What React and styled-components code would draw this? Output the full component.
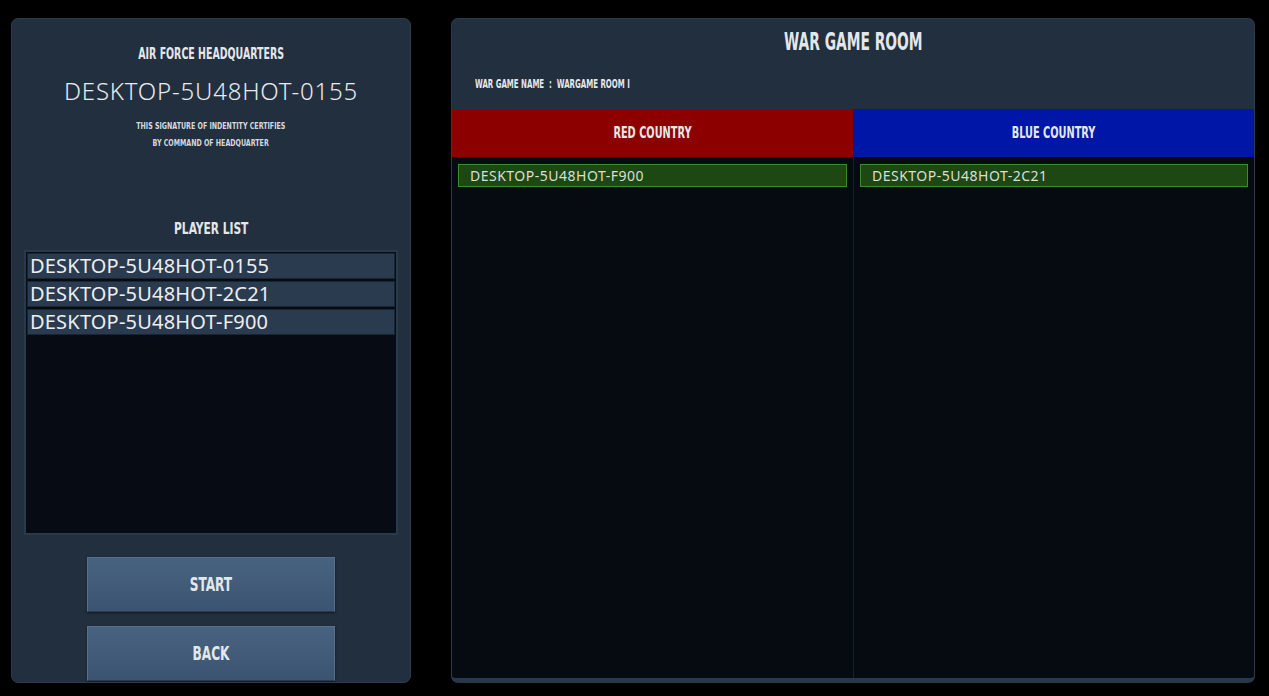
import styled, { createGlobalStyle } from "styled-components";

const GlobalStyle = createGlobalStyle`
  html, body {
    margin: 0;
    padding: 0;
    background: #000;
  }
  * { box-sizing: border-box; }
`;

const HEAD_FONT = `"DejaVu Sans Condensed", "DejaVu Sans", sans-serif`;
const ID_FONT = `"Noto Sans", "DejaVu Sans", sans-serif`;

const Screen = styled.div`
  width: 1269px;
  height: 696px;
  display: flex;
  gap: 40px;
  padding: 18px 14px 13px 11px;
  background: #000;
`;

const Panel = styled.div`
  background: #222f3f;
  border: 1px solid #2b3a4c;
  border-radius: 7px;
  box-shadow: 0 2px 4px rgba(0, 0, 0, 0.8);
  overflow: hidden;
`;

// condensed display lettering (squeezed bold sans)
const Squeeze = styled.span`
  display: inline-block;
  font-family: ${HEAD_FONT};
  font-weight: bold;
  font-size: ${(p) => p.size}px;
  line-height: ${(p) => p.lh || p.size + 2}px;
  color: ${(p) => p.color || "#e4e7ea"};
  white-space: nowrap;
  transform: scaleX(${(p) => p.sx || 0.7});
  transform-origin: ${(p) => (p.left ? "left center" : "center")};
`;

const Center = styled.div`
  text-align: center;
  margin-top: ${(p) => p.mt || 0}px;
`;

const LeftPanel = styled(Panel)`
  width: 400px;
  display: flex;
  flex-direction: column;
  align-items: center;
  padding: 26px 12px 0;
`;

const BigId = styled.div`
  margin-top: 13px;
  font-family: ${ID_FONT};
  font-weight: 300;
  font-size: 24px;
  line-height: 30px;
  letter-spacing: 0.8px;
  color: #e8eaec;
`;

const Cert = styled.div`
  margin-top: 14px;
  display: flex;
  flex-direction: column;
  align-items: center;
  gap: 6px;
`;

const ListBox = styled.div`
  margin-top: 12px;
  width: 374px;
  height: 285px;
  background: #070c14;
  border: 2px solid #2a3a4d;
  display: flex;
  flex-direction: column;
  gap: 2px;
  padding: 1px 1px;
`;

const PlayerRow = styled.div`
  height: 26px;
  background: #2a3b4f;
  border: 1px solid #1a2533;
  font-family: ${ID_FONT};
  font-size: 20px;
  line-height: 24px;
  letter-spacing: 0.2px;
  color: #eceef0;
  padding-left: 2px;
`;

const Buttons = styled.div`
  margin-top: 22px;
  display: flex;
  flex-direction: column;
  gap: 14px;
`;

const Button = styled.button`
  width: 248px;
  height: 55px;
  padding: 0;
  background: linear-gradient(#48637f, #3b5471);
  border: 1px solid #56708c;
  border-bottom-color: #2a3b4e;
  box-shadow: 0 1px 2px rgba(0, 0, 0, 0.5);
  cursor: pointer;
`;

const RightPanel = styled(Panel)`
  flex: 1;
  display: flex;
  flex-direction: column;
  border-bottom: 5px solid #27384b;
`;

const RoomHeader = styled.div`
  height: 90px;
  display: flex;
  flex-direction: column;
  padding: 9px 23px 0;
`;

const RoomName = styled.div`
  margin-top: 18px;
`;

const Teams = styled.div`
  flex: 1;
  display: grid;
  grid-template-columns: 401px 1fr;
  grid-template-rows: 48px 1fr;
  background: #060a11;
`;

const TeamHead = styled.div`
  background: ${(p) => p.color};
  display: flex;
  align-items: center;
  justify-content: center;
`;

const TeamList = styled.div`
  padding: 7px 6px;
  border-left: ${(p) => (p.divided ? "1px solid #18222f" : "none")};
  display: flex;
  flex-direction: column;
  gap: 4px;
`;

const TeamMember = styled.div`
  height: 23px;
  background: #1d4813;
  border: 1px solid #3c8a2c;
  font-family: ${ID_FONT};
  font-size: 14px;
  line-height: 21px;
  letter-spacing: 0.5px;
  color: #d9dfd6;
  padding-left: 11px;
`;

const players = ["DESKTOP-5U48HOT-0155", "DESKTOP-5U48HOT-2C21", "DESKTOP-5U48HOT-F900"];

export default function App() {
  return (
    <>
      <GlobalStyle />
      <Screen>
        <LeftPanel>
          <Center>
            <Squeeze size={15} sx={0.7}>AIR FORCE HEADQUARTERS</Squeeze>
          </Center>
          <BigId>DESKTOP-5U48HOT-0155</BigId>
          <Cert>
            <Squeeze size={9.5} lh={11} sx={0.74} color="#d5d9dd">THIS SIGNATURE OF INDENTITY CERTIFIES</Squeeze>
            <Squeeze size={9.5} lh={11} sx={0.74} color="#d5d9dd">BY COMMAND OF HEADQUARTER</Squeeze>
          </Cert>
          <Center mt={72}>
            <Squeeze size={16} sx={0.74}>PLAYER LIST</Squeeze>
          </Center>
          <ListBox>
            {players.map((p) => (
              <PlayerRow key={p}>{p}</PlayerRow>
            ))}
          </ListBox>
          <Buttons>
            <Button>
              <Squeeze size={19} sx={0.71}>START</Squeeze>
            </Button>
            <Button>
              <Squeeze size={19} sx={0.71}>BACK</Squeeze>
            </Button>
          </Buttons>
        </LeftPanel>

        <RightPanel>
          <RoomHeader>
            <Center>
              <Squeeze size={24} lh={28} sx={0.64}>WAR GAME ROOM</Squeeze>
            </Center>
            <RoomName>
              <Squeeze size={12} lh={14} sx={0.65} left>
                WAR GAME NAME&nbsp;&nbsp;:&nbsp;&nbsp;WARGAME ROOM I
              </Squeeze>
            </RoomName>
          </RoomHeader>
          <Teams>
            <TeamHead color="#8d0000">
              <Squeeze size={16} sx={0.68}>RED COUNTRY</Squeeze>
            </TeamHead>
            <TeamHead color="#0016a6">
              <Squeeze size={16} sx={0.68}>BLUE COUNTRY</Squeeze>
            </TeamHead>
            <TeamList>
              <TeamMember>DESKTOP-5U48HOT-F900</TeamMember>
            </TeamList>
            <TeamList divided>
              <TeamMember>DESKTOP-5U48HOT-2C21</TeamMember>
            </TeamList>
          </Teams>
        </RightPanel>
      </Screen>
    </>
  );
}
